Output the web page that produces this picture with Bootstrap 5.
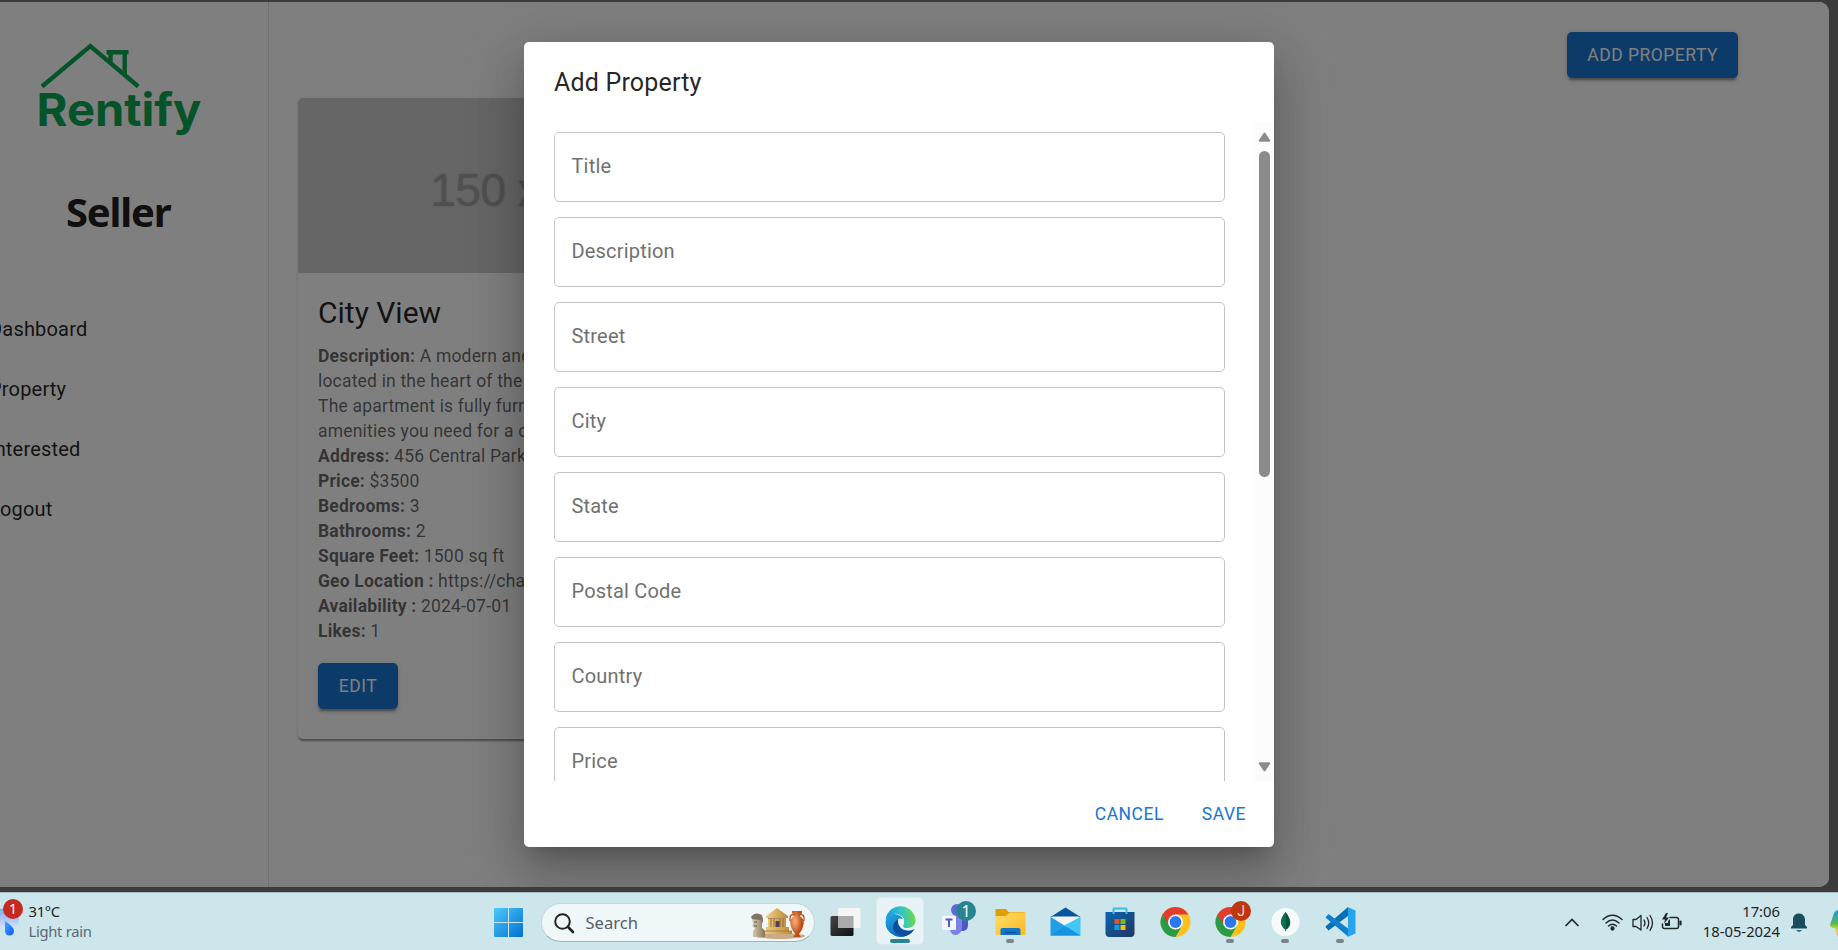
<!DOCTYPE html>
<html lang="en">
<head>
<meta charset="utf-8">
<title>Rentify - Seller</title>
<link href="https://cdn.jsdelivr.net/npm/bootstrap@5.3.0/dist/css/bootstrap.min.css" rel="stylesheet">
<style>
  body{width:1838px;height:950px;overflow:hidden;background:#3b3b3b;font-family:Roboto,sans-serif;color:rgba(0,0,0,.87)}
  .viewport{height:885px;width:1829px;margin-top:2px;border-radius:0 10px 10px 0;background:#fff;overflow:hidden}
  .side{width:269px;border-right:1px solid #e0e0e0;flex:none}
  .logo{display:block;margin:38px 0 0 34px;overflow:visible}
  .role{font:700 40px/50px "Noto Sans",sans-serif;margin:51px 0 0 66px;letter-spacing:-1.2px;color:#202020}
  .side-nav{margin:62px 0 0 -11px}
  .side-nav a{height:60px;font-size:20px;letter-spacing:.19px;color:rgba(0,0,0,.87);text-decoration:none}
  .listing{width:462px;margin:20px 0 0 29px;border:0;border-radius:5px;box-shadow:0 2.5px 1.25px -1.25px rgba(0,0,0,.2),0 1.25px 1.25px rgba(0,0,0,.14),0 1.25px 3.75px rgba(0,0,0,.12);height:641px}
  .photo{height:175px;background:#ccc;border-radius:5px 5px 0 0;color:#a0a0a0;font:46px/1 "Liberation Sans",Arial,sans-serif;padding-top:8px;letter-spacing:-.5px;text-shadow:0 0 2px #a0a0a0}
  .listing h5{font-size:30px;line-height:40px;font-weight:400;margin-bottom:10.5px}
  .facts{font-size:17.5px;line-height:25.03px;letter-spacing:.1874px;color:rgba(0,0,0,.6);white-space:nowrap}
  .btn-mui{font-size:17.5px;line-height:30.6px;letter-spacing:.5px;padding:7.5px 20px;border-radius:5px;border:0;height:46px}
  .btn-fill,.btn-fill:hover{background:#1976d2;color:#fff;box-shadow:0 3.75px 1.25px -2.5px rgba(0,0,0,.2),0 2.5px 2.5px rgba(0,0,0,.14),0 1.25px 6.25px rgba(0,0,0,.12)}
  .btn-flat{color:#1976d2;padding:7.5px 10px}
  .shade{left:0;top:2px;width:1829px;height:885px;background:rgba(0,0,0,.5);border-radius:0 10px 10px 0;overflow:hidden}
  .dlg{width:750px;height:805px;margin:40px auto 0 524px;background:#fff;border-radius:5px;box-shadow:0 13.75px 18.75px -8.75px rgba(0,0,0,.2),0 30px 47.5px 3.75px rgba(0,0,0,.14),0 11.25px 57.5px 10px rgba(0,0,0,.12)}
  .dlg h2{font-size:25px;line-height:40px;font-weight:400;letter-spacing:.19px;padding:21px 30px 19px;margin:0}
  .dlg-body{height:659px;overflow:hidden}
  .fields{padding:10px 30px 0;gap:15px}
  .field{height:70px;border:1px solid #c4c4c4;border-radius:5px;padding:0 0 2px 16.5px;font-size:20px;letter-spacing:.19px;color:#717171;flex:none}
  .scroll{width:19px;background:#fcfcfc;flex:none}
  .thumb{width:11px;height:326px;border-radius:6px;background:#8b8b8b}
  .dlg-foot{height:66px;padding:10px 18px 10px 0;gap:18px}
  .taskbar{height:58px;margin-top:5px;background:#cde6eb;border-top:1px solid #a9b9bd;font-family:"Noto Sans",sans-serif;font-size:14.8px;line-height:20px;color:#1d2427;padding-top:1px}
  .weather{width:490px}
  .find{width:274px;height:39px;border-radius:20px;background:#f0f7f9;border:1px solid #c3d7dc;border-bottom-color:#9eb3ba;color:#566064;font-size:16.6px}
  .slot{width:55px;height:56px;flex:none}
  .slot.active::before{content:"";position:absolute;left:3.5px;top:3px;width:48px;height:48px;border-radius:5px;background:#e8f3f7;border:1px solid #dbe8ec}
  .slot svg{position:relative}
  .slot.run::after{content:"";position:absolute;left:23.5px;bottom:7px;width:8px;height:4px;border-radius:2px;background:#76868a}
  .slot.active.run::after{left:17.5px;width:20px;background:#278490}
  .dot{width:20px;height:20px;border-radius:50%;color:#fff;font-size:14px;line-height:20px;text-align:center}
</style>
</head>
<body>
<div class="viewport d-flex">
  <aside class="side">
    <svg class="logo" width="172" height="96" viewBox="34 40 172 96">
      <g fill="none" stroke="#0aa650" stroke-width="4.4"><path d="M42 86.5 90.3 46 138.3 86.5"/><path d="M106.5 52.3H128.5M110.5 52V62.5M124.7 52V75.5"/></g>
      <text x="36.500" y="125.5" fill="#0aa650" font-family="Inter, sans-serif" font-weight="700" font-size="45" textLength="165" lengthAdjust="spacingAndGlyphs">Rentify</text>
    </svg>
    <h1 class="role">Seller</h1>
    <nav class="side-nav d-flex flex-column">
      <a class="d-flex align-items-center" href="#">Dashboard</a>
      <a class="d-flex align-items-center" href="#">Property</a>
      <a class="d-flex align-items-center" href="#">Interested</a>
      <a class="d-flex align-items-center" href="#">Logout</a>
    </nav>
  </aside>
  <main class="flex-grow-1">
    <div class="d-flex justify-content-end" style="padding:30px 91px 0 0"><button class="btn btn-mui btn-fill">ADD PROPERTY</button></div>
    <div class="card listing">
      <div class="photo d-flex align-items-center justify-content-center">150 x 150</div>
      <div class="card-body" style="padding:20px">
        <h5>City View</h5>
        <div class="facts"><b>Description:</b> A modern and<br>located in the heart of the<br>The apartment is fully furn<br>amenities you need for a c<br><b>Address:</b> 456 Central Park<br><b>Price:</b> $3500<br><b>Bedrooms:</b> 3<br><b>Bathrooms:</b> 2<br><b>Square Feet:</b> 1500 sq ft<br><b>Geo Location :</b> https://cha<br><b>Availability :</b> 2024-07-01<br><b>Likes:</b> 1</div>
        <button class="btn btn-mui btn-fill" style="margin-top:19px;width:80px">EDIT</button>
      </div>
    </div>
  </main>
</div>
<div class="shade position-absolute">
  <section class="dlg">
    <h2>Add Property</h2>
    <div class="dlg-body d-flex">
      <div class="fields d-flex flex-column flex-grow-1">
        <div class="field d-flex align-items-center">Title</div>
        <div class="field d-flex align-items-center">Description</div>
        <div class="field d-flex align-items-center">Street</div>
        <div class="field d-flex align-items-center">City</div>
        <div class="field d-flex align-items-center">State</div>
        <div class="field d-flex align-items-center">Postal Code</div>
        <div class="field d-flex align-items-center">Country</div>
        <div class="field d-flex align-items-center">Price</div>
      </div>
      <div class="scroll d-flex flex-column align-items-center">
        <svg width="13" height="10" style="margin:10px 0 9px;flex:none"><path d="M6.5 1.5 11.3 8.7H1.7Z" fill="#8b8b8b" stroke="#8b8b8b" stroke-width="2" stroke-linejoin="round"/></svg>
        <div class="thumb"></div>
        <svg class="mt-auto" width="13" height="10" style="margin-bottom:9px;flex:none"><path d="M6.5 8.5 11.3 1.3H1.7Z" fill="#8b8b8b" stroke="#8b8b8b" stroke-width="2" stroke-linejoin="round"/></svg>
      </div>
    </div>
    <div class="dlg-foot d-flex justify-content-end"><button class="btn btn-mui btn-flat">CANCEL</button><button class="btn btn-mui btn-flat">SAVE</button></div>
  </section>
</div>
<footer class="taskbar d-flex align-items-start">
  <div class="weather d-flex flex-none">
    <div class="position-relative" style="width:28.5px;height:50px">
      <svg width="24" height="50">
        <defs><linearGradient id="cl" x2="0" y2="1"><stop stop-color="#7fa7ee"/><stop offset="1" stop-color="#d5e0fa"/></linearGradient><linearGradient id="dr" x2="1" y2="1"><stop stop-color="#4aa3ff"/><stop offset="1" stop-color="#0a5cf5"/></linearGradient></defs>
        <path d="M0 15Q6 13 9 19Q19 18 19 26Q19 33 12 34H0Z" fill="url(#cl)"/><path d="M5 27Q14 33 14 37A4.5 4.5 0 0 1 5 37Z" fill="url(#dr)"/>
      </svg>
      <span class="dot position-absolute" style="left:3px;top:5px;background:#c42b1c">1</span>
    </div>
    <div style="padding-top:7px;letter-spacing:-.3px">31°C<br><span style="color:#5a6a6f">Light rain</span></div>
  </div>
  <svg width="37" height="56" style="margin-right:13.5px;flex:none">
    <defs><linearGradient id="wn" x2="1" y2="1"><stop stop-color="#4cc9fb"/><stop offset="1" stop-color="#0070d0"/></linearGradient></defs>
    <path d="M4 15a1 1 0 0 1 1-1H18V28H4ZM19 14H32a1 1 0 0 1 1 1V28H19ZM4 29H18V43H5a1 1 0 0 1-1-1ZM19 29H33V42a1 1 0 0 1-1 1H19Z" fill="url(#wn)"/>
  </svg>
  <div class="find d-flex align-items-center" style="margin-top:9px;flex:none">
    <svg width="44" height="36"><circle cx="20.5" cy="16.5" r="7.3" fill="none" stroke="#222" stroke-width="2"/><path d="m26 22 5 5" stroke="#222" stroke-width="2.6" stroke-linecap="round"/></svg>
    <span>Search</span>
    <svg class="ms-auto" width="56" height="34" viewBox="0 0 56 34" style="margin-right:8px">
      <defs><linearGradient id="tp" x2="1"><stop stop-color="#f0cf86"/><stop offset="1" stop-color="#bf8a3a"/></linearGradient><radialGradient id="vs" cx=".35" cy=".4"><stop stop-color="#ffb27d"/><stop offset="1" stop-color="#bd4d16"/></radialGradient><linearGradient id="st"><stop stop-color="#dccdb4"/><stop offset="1" stop-color="#887358"/></linearGradient></defs>
      <ellipse cx="30" cy="30" rx="25" ry="3" fill="#b98857" opacity=".7"/>
      <path d="M16 10 27 2 38 10V12H16ZM18 13H36V23H18Z" fill="url(#tp)"/><path d="M16 21H39V25H42V28H13V25H16Z" fill="url(#tp)"/>
      <path d="M21 13v8M24 13v8M30 13v8M33 13v8" stroke="#94682a" stroke-width=".9"/><path d="M25.500 15h4v6h-4z" fill="#503e5c"/><path d="M13 25H42M18 12.5H36" stroke="#99702f" stroke-width=".8"/>
      <path d="M2 13Q3 7 10 9Q15 11 12 17L12 22Q16 24 15 31H3Q2 25 5 22Q1 21 3 18Z" fill="url(#st)"/><path d="M1 11Q5 5 12 9L13 17 10 14 2 13Z" fill="#817665"/><path d="M4 16h3M4 20h3" stroke="#665744"/>
      <path d="M42 5H52V7L49.500 10Q55 13 53.500 19Q52 25 49 28L51 31H43L45.500 28Q42 25 40.500 19Q39 13 44.500 10L42 7Z" fill="url(#vs)"/><path d="M45 9Q39 7 40 15M49 9Q55 7 54 15" fill="none" stroke="#b84e1b" stroke-width="1.4"/>
    </svg>
  </div>
  <div class="d-flex" style="margin-left:3px">
    <div class="slot position-relative"><svg width="55" height="56"><defs><linearGradient id="tv" x2="1" y2="1"><stop stop-color="#444"/><stop offset="1" stop-color="#111"/></linearGradient></defs><rect x="12.500" y="22" width="23" height="20" rx="1.500" fill="url(#tv)"/><rect x="20" y="14" width="22.500" height="20" rx="1.500" fill="#f5f5f5"/><path d="M20 22H35.500V34H20Z" fill="#aaa"/></svg></div>
    <div class="slot position-relative active run"><svg width="55" height="56" viewBox="0 0 55 56">
      <defs><linearGradient id="e1" x1="0" y1=".5" x2="1" y2=".4"><stop stop-color="#1696dc"/><stop offset=".5" stop-color="#2cc3cf"/><stop offset="1" stop-color="#72da45"/></linearGradient><linearGradient id="e2" x2=".6" y2="1"><stop stop-color="#25a9e4"/><stop offset="1" stop-color="#0868ba"/></linearGradient></defs>
      <path d="M12.600 26A15 15 0 0 1 42.500 26C43 32 38 34 33 34Q29 33.500 30.500 31Q33 24 27 21Q18 17 12.600 26Z" fill="url(#e1)"/>
      <path d="M12.500 28Q14 18 22 20Q28 21 30 25Q24 23 22.500 30Q23 39 34 38L38 38.500A15 15 0 0 1 12.500 28Z" fill="url(#e2)"/>
      <path d="M25 25Q18 30 21 37Q25 43 33 42Q39 40 41.500 35Q36 38 30 35.500Q24 32 25 25Z" fill="#0d4f9d"/>
    </svg></div>
    <div class="slot position-relative"><svg width="55" height="56"><circle cx="29" cy="16" r="6" fill="#6268d8"/><path d="M31 22H40V31Q40 37 34 37H31Z" fill="#5358c0"/><path d="M22 22H34V34Q33 41 27.500 41Q23 41 22 36Z" fill="#7b83eb"/><rect x="14" y="22" width="14" height="14" rx="1" fill="#f5f5fb"/><path d="M17.500 25.500H24.500M21 25.500V33" stroke="#5059c9" stroke-width="2"/></svg><span class="dot position-absolute" style="left:28.500px;top:7px;background:#278490;font-size:16px">1</span></div>
    <div class="slot position-relative run"><svg width="55" height="56"><defs><linearGradient id="fo" x2="1" y2="1"><stop stop-color="#ffdc6e"/><stop offset="1" stop-color="#fbb91f"/></linearGradient></defs><path d="M12.500 16q0-1 1-1H23l2.500 3H42v6H12.500Z" fill="#dfa003"/><path d="M12.500 22H23L27 18.500H42.500V41H12.500Z" fill="url(#fo)"/><path d="M17.500 41V36q0-2 2-2H35.500q2 0 2 2V41Z" fill="#1275c8"/><path d="M22 38.500H33" stroke="#0c559e" stroke-width="1.500"/></svg></div>
    <div class="slot position-relative"><svg width="55" height="56"><path d="M12.500 23 27.500 13.500 42.500 23Z" fill="#0755a3"/><path d="M14 22.500H41L28 33Z" fill="#f4f4f4"/><path d="M12.500 23 42.500 41.500H12.500Z" fill="#1fa0e8"/><path d="M42.500 23V41.500L25 32Z" fill="#42c8f5"/><path d="M12.500 41.500 27 32 42.500 41.500Z" fill="#1593e1"/></svg></div>
    <div class="slot position-relative"><svg width="55" height="56"><defs><linearGradient id="so" x2="1" y2="1"><stop stop-color="#0966b3"/><stop offset="1" stop-color="#22365f"/></linearGradient></defs><path d="M12.500 18H41.500V39q0 4-4 4H16.500q-4 0-4-4Z" fill="url(#so)"/><path d="M20.500 20V15q0-.5.5-.5H33q.5 0 .5.500V20" fill="none" stroke="#38bdf0" stroke-width="2"/><path d="M21.500 25h5v5h-5z" fill="#f25022"/><path d="M27.500 25h5v5h-5z" fill="#7fba00"/><path d="M21.500 31h5v5h-5z" fill="#00a4ef"/><path d="M27.500 31h5v5h-5z" fill="#ffb900"/></svg></div>
    <div class="slot position-relative"><svg width="55" height="56"><g id="chrome"><circle cx="27.500" cy="28" r="15" fill="#fcc21b"/><path d="M27.500 28 14.500 20.500A15 15 0 0 0 27.500 43L34 31.750Z" fill="#2a9a48"/><path d="M14.500 20.500A15 15 0 0 1 40.500 20.500H27.500L21 31.500Z" fill="#e33b2e"/><circle cx="27.500" cy="28" r="7.500" fill="#fff"/><circle cx="27.500" cy="28" r="5.900" fill="#2a78ee"/></g></svg></div>
    <div class="slot position-relative run"><svg width="55" height="56"><use href="#chrome"/></svg><span class="dot position-absolute" style="left:28.500px;top:7px;background:#bf360c;color:#f3d2c6;font-family:Roboto,sans-serif">J</span></div>
    <div class="slot position-relative run"><svg width="55" height="56"><circle cx="27.500" cy="28" r="14" fill="#f8faf9"/><path d="M27.500 18Q22.500 24 22.800 28.500Q23.500 33 27 35.500V37H28V35.500Q32 33 32.200 28.500Q32 24 27.500 18Z" fill="#0b7050"/><path d="M27.500 18Q32 24 32.200 28.500Q32 33 28 35.500Z" fill="#06533d"/></svg></div>
    <div class="slot position-relative run"><svg width="55" height="56"><path d="M12.500 33 15.500 36.500 35 22V13L13 32Z" fill="#0a70b4"/><path d="M12.500 23.500 15.500 20 35 34.500V42.500Z" fill="#0e80cc"/><path d="M34.500 13 42.500 16.500V39.500L34.500 43Q35.500 42 35 40V16Q35.500 14 34.500 13Z" fill="#27a4f0"/></svg></div>
  </div>
  <div class="d-flex ms-auto">
    <svg width="130" height="56" fill="none" stroke="#20282b" stroke-width="1.700" stroke-linecap="round">
      <path d="m7 31.500 6-6 6 6"/>
      <g stroke-width="1.500"><path d="M44 25.500Q53.500 17 63 25.500M47 29Q53.500 23 60 29M49.500 32Q53.500 28.500 57.500 32"/><circle cx="53.500" cy="34.500" r="1.400" fill="#20282b"/>
      <path d="M74 25.500H77L82 21.500V36L77 32.500H74Z" stroke-width="1.300" stroke-linejoin="round"/><path d="M85 26Q87 29 85 32M88 23.500Q91.500 29 88 34.500M91 21.500Q96 29 91 36.500" stroke-width="1.300"/>
      <path d="M111 23.500H117.500q2 0 2 2V32.500q0 2-2 2H105.500q-2 0-2-2V30"/><path d="M121.500 27.500V30.500" stroke-width="2.200"/><path d="M106 32V29H109V27L111 25V32Z" fill="#20282b" stroke="none"/><path d="M107 19 103 25.500H106L105 30 110 23.500H107L109 19Z" fill="#20282b" stroke="none"/></g>
    </svg>
    <div class="text-end" style="width:91px;padding-top:7px">17:06<br>18-05-2024</div>
    <svg width="58" height="56"><path d="M11 34.500V33L13 31V25Q13.500 19.500 19 19.500Q24 19.500 25 25V31L27 33V34.500Z" fill="#184d5e"/><path d="M16 36H22Q19 40 16 36Z" fill="#26798c"/>
      <defs><linearGradient id="cp" x2="0" y2="1"><stop stop-color="#1598e8"/><stop offset=".5" stop-color="#54b957"/><stop offset=".75" stop-color="#ffd220"/><stop offset="1" stop-color="#f9732c"/></linearGradient></defs><path d="M58 16Q54 17 53 22L50 31Q50 34 55 34L58 43Z" fill="url(#cp)"/></svg>
  </div>
</footer>
<script src="https://cdn.jsdelivr.net/npm/bootstrap@5.3.0/dist/js/bootstrap.bundle.min.js"></script>
</body>
</html>
